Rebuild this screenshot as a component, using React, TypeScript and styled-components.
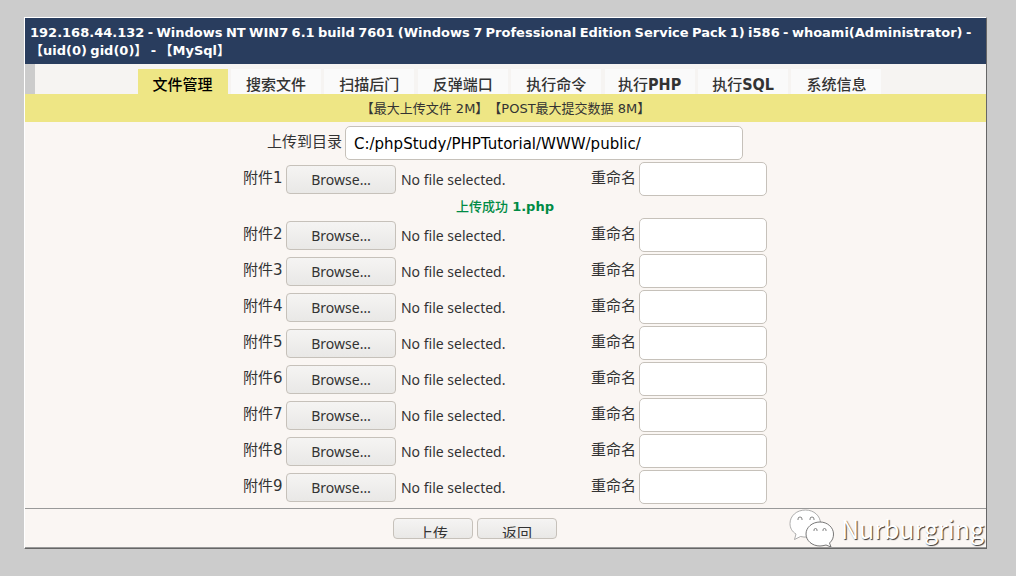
import React, { useRef, useState } from "react";
import styled, { createGlobalStyle } from "styled-components";

const GlobalStyle = createGlobalStyle`
  * { box-sizing: border-box; }
  body {
    margin: 0;
    background: #cccccc;
    color: #333333;
    font: 13px/18px "DejaVu Sans", "Noto Sans CJK SC", sans-serif;
    text-spacing-trim: space-all;
  }
`;

const Page = styled.div`
  padding: 17px 29px 27px 24px;
`;

const Panel = styled.main`
  border: 1px solid;
  border-color: #ffffff #666666 #666666 #ffffff;
  background: #faf6f3;
`;

const Header = styled.header`
  padding: 5px;
  background: #293d5e;
  color: #ffffff;
`;

const Title = styled.h1`
  margin: 0;
  font: 700 13px/18px "Noto Sans", "Noto Sans CJK SC", sans-serif;
`;

const Word = styled.span`
  font-family: "DejaVu Sans", "Noto Sans CJK SC", sans-serif;
  line-height: 14px;
`;

const Nav = styled.nav`
  display: flex;
  justify-content: center;
  padding: 5px 0 0 10px;
  border-left: 10px solid #cccccc;
  background: #f6f4f2;
`;

const Tabs = styled.div`
  display: flex;
  justify-content: space-between;
  width: 744px;
  margin-right: 12px;
`;

const Tab = styled.a<{ $active?: boolean }>`
  width: 90px;
  height: 25px;
  overflow: hidden;
  background: ${(p) => (p.$active ? "#eee685" : "#fafafa")};
  color: ${(p) => (p.$active ? "#000000" : "#333333")};
  font: 500 15px/30px "Noto Sans CJK SC", sans-serif;
  text-align: center;
  text-decoration: none;
`;

const TabKeyword = styled.strong`
  font: 700 16px/30px "DejaVu Sans Condensed", "DejaVu Sans", sans-serif;
`;

const Notice = styled.p`
  margin: 0;
  padding: 6px 0 4px;
  background: #eee685;
  text-align: center;
`;

const Form = styled.form`
  display: flex;
  flex-direction: column;
`;

const Rows = styled.div`
  display: flex;
  flex-direction: column;
  align-items: center;
  gap: 2px;
  padding: 4px 1px 4px 0;
`;

const Row = styled.div`
  display: flex;
  align-items: center;
  height: 34px;
`;

const Label = styled.label`
  padding: 0 3px 2px 0;
  font-size: 15px;
  line-height: 20px;
  white-space: nowrap;
`;

const SlotLabel = styled(Label)`
  width: 43px;
`;

const TextInput = styled.input<{ $wide?: boolean }>`
  width: ${(p) => (p.$wide ? "398px" : "128px")};
  height: 34px;
  padding: 2px 8px 0;
  border: 1px solid #c6c1ba;
  border-radius: 5px;
  background: #ffffff;
  color: #000000;
  font: 15px "DejaVu Sans", "Noto Sans CJK SC", sans-serif;
`;

const Button = styled.button`
  border: 1px solid #c6c1ba;
  border-radius: 4px;
  background: linear-gradient(#f5f4f3, #e9e8e6);
  color: #333333;
`;

const BrowseButton = styled(Button)`
  width: 110px;
  height: 29px;
  padding: 2px 0 0;
  font: 14px/20px "Noto Sans", sans-serif;
`;

const ActionButton = styled(Button)`
  width: 80px;
  height: 21px;
  padding: 2px 0 0;
  overflow: hidden;
  font: 15px/24px "Noto Sans CJK SC", sans-serif;
`;

const ActionText = styled.span`
  display: block;
  height: 17px;
  overflow: hidden;
`;

const FileName = styled.span`
  width: 195px;
  padding: 2px 5px 0;
  overflow: hidden;
  white-space: nowrap;
  font: 14px/20px "Noto Sans", "Noto Sans CJK SC", sans-serif;
`;

const Message = styled.p`
  margin: 0;
  color: #008b45;
  font-weight: 500;
`;

const Footer = styled.footer`
  display: flex;
  justify-content: center;
  align-items: flex-start;
  gap: 4px;
  position: relative;
  height: 40px;
  padding: 9px 61px 0 0;
  border-top: 1px solid #999999;
  border-bottom: 1px solid #999999;
`;

const Watermark = styled.div`
  position: absolute;
  right: 2px;
  bottom: 0;
  display: flex;
  align-items: center;
  gap: 7px;
  color: #ffffff;
  font: 25px/38px "Noto Sans CJK SC", sans-serif;
  text-shadow: 1px 1px 1px #333333;
`;

const title =
  "192.168.44.132 - Windows NT WIN7 6.1 build 7601 (Windows 7 Professional Edition Service Pack 1) i586 - whoami(Administrator) - 【uid(0) gid(0)】 - 【MySql】";

const tabs = [
  { text: "文件管理" },
  { text: "搜索文件" },
  { text: "扫描后门" },
  { text: "反弹端口" },
  { text: "执行命令" },
  { text: "执行", keyword: "PHP" },
  { text: "执行", keyword: "SQL" },
  { text: "系统信息" },
];
const slots = [1, 2, 3, 4, 5, 6, 7, 8, 9];

function UploadRow({ slot }: { slot: number }) {
  const picker = useRef<HTMLInputElement>(null);
  const [name, setName] = useState("No file selected.");
  return (
    <Row>
      <SlotLabel htmlFor={`file${slot}`}>附件{slot}</SlotLabel>
      <input
        hidden
        type="file"
        id={`file${slot}`}
        ref={picker}
        onChange={(e) => setName(e.target.files?.[0]?.name ?? "No file selected.")}
      />
      <BrowseButton type="button" onClick={() => picker.current?.click()}>
        Browse…
      </BrowseButton>
      <FileName>{name}</FileName>
      <Label htmlFor={`rename${slot}`}>重命名</Label>
      <TextInput type="text" id={`rename${slot}`} />
    </Row>
  );
}

function ChatLogo() {
  return (
    <svg width="45" height="38" viewBox="0 0 45 38" fill="#ffffff" stroke="#999999" strokeWidth="0.8" aria-hidden="true">
      <path d="M16.500 1C7.500 1 1 7 1 14.500c0 4.500 2 8 6 10.500L5.500 30.500l6-3c2 .5 5 .8 7 .5 8-1 13-6 13-13.500S25 1 16.500 1z" />
      <path stroke="#555555" d="M31 13c-8 0-14 5.500-14 12s6 12 14 12c2 0 4-.5 6-1l5 2-1.500-4c3-2.500 4-5.500 4-9 0-6.500-6-12-13.500-12z" />
      <path fill="none" stroke="#666666" d="M9 11v-1a2 2 0 0 1 4 0v1M21 11v-1a2 2 0 0 1 4 0v1M25 22v-1a1.500 1.500 0 0 1 3 0v1M34 22v-1a1.500 1.500 0 0 1 3 0v1" />
    </svg>
  );
}

export default function App() {
  return (
    <Page>
      <GlobalStyle />
      <Panel>
        <Header>
          <Title>
            {title.split(" ").map((word, i) => (
              <React.Fragment key={i}>
                <Word>{word}</Word>{" "}
              </React.Fragment>
            ))}
          </Title>
        </Header>
        <Nav>
          <Tabs>
            {tabs.map(({ text, keyword }, i) => (
              <Tab key={i} href="#" $active={i === 0}>
                {text}
                {keyword && <TabKeyword>{keyword}</TabKeyword>}
              </Tab>
            ))}
          </Tabs>
        </Nav>
        <Notice>【最大上传文件 2M】【POST最大提交数据 8M】</Notice>
        <Form onSubmit={(e) => e.preventDefault()}>
          <Rows>
            <Row>
              <Label htmlFor="dir">上传到目录</Label>
              <TextInput $wide type="text" id="dir" defaultValue="C:/phpStudy/PHPTutorial/WWW/public/" />
            </Row>
            <UploadRow slot={1} />
            <Message>
              上传成功 <strong>1.php</strong>
            </Message>
            {slots.slice(1).map((slot) => (
              <UploadRow key={slot} slot={slot} />
            ))}
          </Rows>
          <Footer>
            <ActionButton type="submit">
              <ActionText>上传</ActionText>
            </ActionButton>
            <ActionButton type="button">
              <ActionText>返回</ActionText>
            </ActionButton>
            <Watermark>
              <ChatLogo />
              Nurburgring
            </Watermark>
          </Footer>
        </Form>
      </Panel>
    </Page>
  );
}
